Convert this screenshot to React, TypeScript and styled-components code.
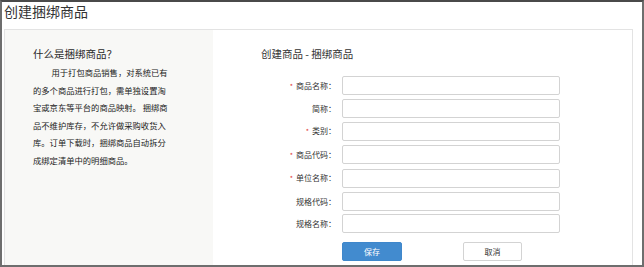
import React from 'react';
import styled, { createGlobalStyle } from 'styled-components';

const GlobalStyle = createGlobalStyle`
  html, body {
    margin: 0;
    padding: 0;
    background: #ffffff;
  }
  body {
    font-family: "Noto Sans CJK SC", "Noto Sans", sans-serif;
    color: #333;
  }
`;

const Frame = styled.div`
  box-sizing: border-box;
  width: 644px;
  height: 267px;
  display: flex;
  flex-direction: column;
  padding-left: 2px;
  border: 2px solid #6e6e6e;
  border-top-color: #4a4a4a;
  background: #fff;
`;

const PageTitle = styled.h1`
  margin: 0 0 9px;
  font-size: 14px;
  line-height: 18px;
  font-weight: normal;
  color: #333;
`;

const Panel = styled.div`
  flex: 1;
  display: flex;
  margin-right: 9px;
  border: 1px solid #e3e3e3;
  border-bottom: none;
`;

const Intro = styled.div`
  width: 180px;
  padding: 17px 0 0 28px;
  background: #f8f8f6;
`;

const IntroTitle = styled.div`
  margin: 0 0 3px;
  font-size: 10.5px;
  line-height: 14px;
  color: #2a2a2a;
`;

const IntroLine = styled.div<{ $indent?: boolean }>`
  font-size: 8.3px;
  line-height: 17.5px;
  height: 17.5px;
  color: #222;
  white-space: nowrap;
  padding-left: ${({ $indent }) => ($indent ? '18.5px' : '0')};
`;

const FormArea = styled.div`
  flex: 1;
  padding: 17px 0 0 48px;
`;

const FormTitle = styled.div`
  margin: 0 0 14.7px;
  font-size: 10.5px;
  line-height: 14px;
  color: #333;
`;

const Form = styled.div`
  display: grid;
  grid-template-columns: 75px 218px;
  column-gap: 6px;
  row-gap: 3.4px;
  align-items: center;
`;

const Label = styled.label`
  text-align: right;
  font-size: 8px;
  line-height: 19px;
  color: #333;
  white-space: nowrap;
`;

const Star = styled.span`
  color: #e0302e;
  font-size: 7px;
  margin-right: 3px;
`;

const Input = styled.input`
  box-sizing: border-box;
  height: 19px;
  width: 218px;
  margin: 0;
  padding: 0 4px;
  border: 1px solid #d3d3d3;
  border-radius: 2px;
  background: #fff;
  outline: none;
`;

const Buttons = styled.div`
  grid-column: 2;
  display: flex;
  gap: 61px;
  margin-top: 6px;
`;

const Button = styled.button<{ $primary?: boolean }>`
  box-sizing: border-box;
  width: ${({ $primary }) => ($primary ? '60px' : '59px')};
  height: 19px;
  padding: 0;
  border: 1px solid ${({ $primary }) => ($primary ? '#3f87cb' : '#d3d3d3')};
  border-radius: 2px;
  background: ${({ $primary }) => ($primary ? '#428bcf' : '#fff')};
  color: ${({ $primary }) => ($primary ? '#fff' : '#333')};
  font-family: "Noto Sans CJK SC", sans-serif;
  font-size: 8px;
  line-height: 17px;
`;

const fields = [
  { label: '商品名称：', required: true },
  { label: '简称：', required: false },
  { label: '类别：', required: true },
  { label: '商品代码：', required: true },
  { label: '单位名称：', required: true },
  { label: '规格代码：', required: false },
  { label: '规格名称：', required: false },
];

const introLines = [
  '用于打包商品销售，对系统已有',
  '的多个商品进行打包，需单独设置淘',
  '宝或京东等平台的商品映射。 捆绑商',
  '品不维护库存，不允许做采购收货入',
  '库。订单下载时，捆绑商品自动拆分',
  '成绑定清单中的明细商品。',
];

export default function App() {
  return (
    <>
      <GlobalStyle />
      <Frame>
        <PageTitle>创建捆绑商品</PageTitle>
        <Panel>
          <Intro>
            <IntroTitle>什么是捆绑商品？</IntroTitle>
            {introLines.map((line, i) => (
              <IntroLine key={i} $indent={i === 0}>
                {line}
              </IntroLine>
            ))}
          </Intro>
          <FormArea>
            <FormTitle>创建商品 - 捆绑商品</FormTitle>
            <Form>
              {fields.map((f) => (
                <React.Fragment key={f.label}>
                  <Label>
                    {f.required && <Star>*</Star>}
                    {f.label}
                  </Label>
                  <Input type="text" />
                </React.Fragment>
              ))}
              <Buttons>
                <Button $primary>保存</Button>
                <Button>取消</Button>
              </Buttons>
            </Form>
          </FormArea>
        </Panel>
      </Frame>
    </>
  );
}
